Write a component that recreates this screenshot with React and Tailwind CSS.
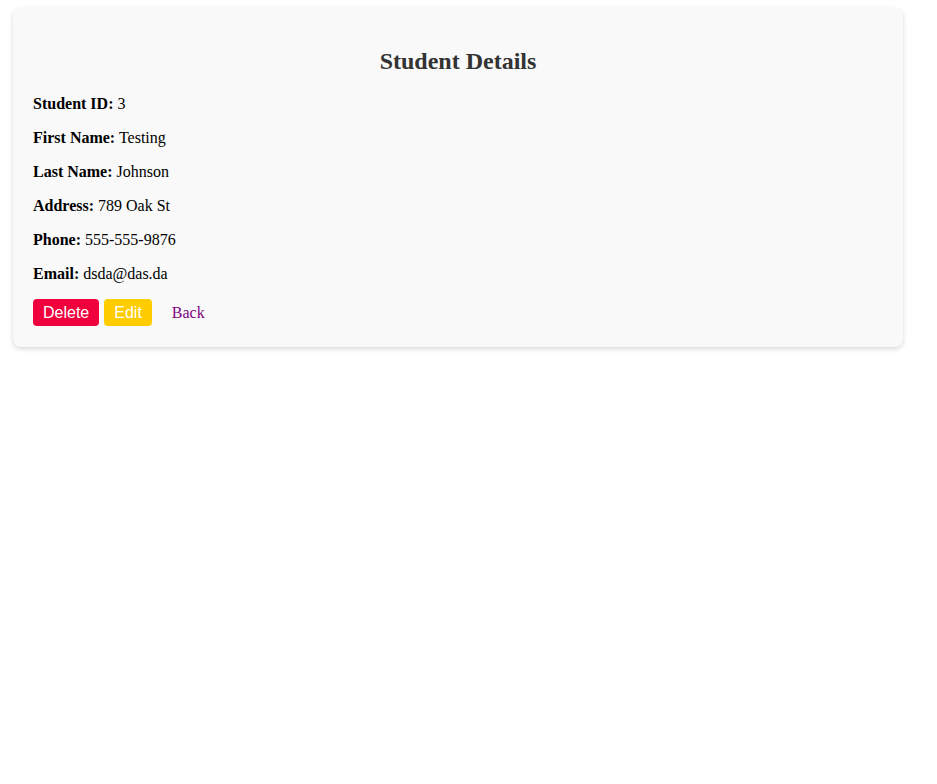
export default function App() {
  const student = {
    id: 3,
    firstName: "Testing",
    lastName: "Johnson",
    address: "789 Oak St",
    phone: "555-555-9876",
    email: "dsda@das.da",
  };

  const rows = [
    ["Student ID:", student.id],
    ["First Name:", student.firstName],
    ["Last Name:", student.lastName],
    ["Address:", student.address],
    ["Phone:", student.phone],
    ["Email:", student.email],
  ];

  return (
    <div className="min-h-screen bg-white pt-2 pl-[13px] font-['Liberation_Serif',serif] text-black">
      <div className="w-[890px] rounded-lg bg-[#f9f9f9] px-5 pt-5 pb-[21px] shadow-[0_2px_5px_rgba(0,0,0,0.15)]">
        <h2 className="mt-[19px] mb-5 text-center text-2xl leading-[28px] font-bold text-[#333]">
          Student Details
        </h2>
        {rows.map(([label, value]) => (
          <p key={label} className="mb-4 text-base leading-[18px]">
            <strong>{label}</strong> {value}
          </p>
        ))}
        <div className="flex items-center">
          <button className="h-[27px] rounded bg-[#f0003c] px-2.5 font-['Liberation_Sans',sans-serif] text-base text-white">
            Delete
          </button>
          <button className="ml-[5px] h-[27px] rounded bg-[#ffcc00] px-2.5 font-['Liberation_Sans',sans-serif] text-base text-white">
            Edit
          </button>
          <a href="#" className="ml-5 text-base text-[#800080]">
            Back
          </a>
        </div>
      </div>
    </div>
  );
}
